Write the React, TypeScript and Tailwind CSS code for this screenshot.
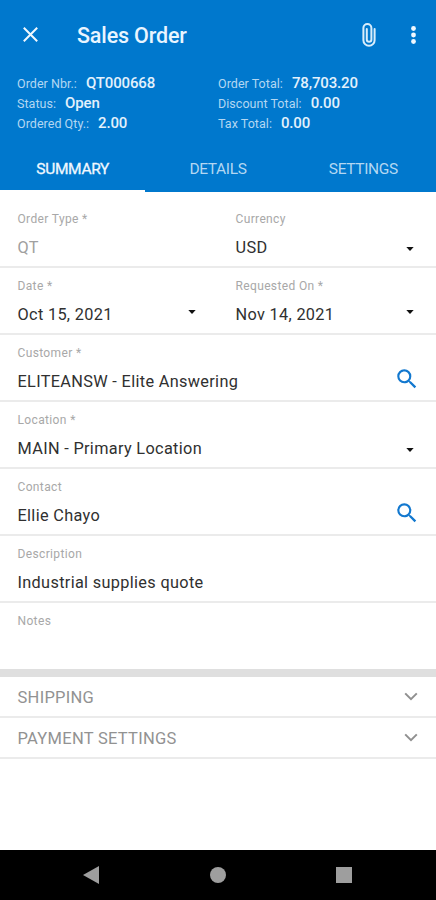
import React from "react";

type FieldProps = {
    label: string;
    value?: string;
    muted?: boolean;
    icon?: "arrow" | "date" | "search";
    className?: string;
};

const ArrowIcon = ({ className }: { className: string }) => (
    <svg className={`h-1 w-2 ${className}`} viewBox="0 0 8 4">
        <path d="M.3 0h7.4L4 4z" fill="#111" />
    </svg>
);

const SearchIcon = () => (
    <svg className="w-[26px] h-[26px] -mr-[9px]" viewBox="0 0 24 24" fill="#1278cf">
        <path d="M15.5 14h-.79l-.28-.27A6.471 6.471 0 0 0 16 9.5 6.5 6.5 0 1 0 9.5 16c1.61 0 3.09-.59 4.23-1.57l.27.28v.79l5 4.99L20.49 19l-4.99-5zm-6 0C7.01 14 5 11.99 5 9.5S7.01 5 9.5 5 14 7.01 14 9.5 11.99 14 9.5 14z" />
    </svg>
);

const ChevronIcon = () => (
    <svg className="w-[14px] h-[9px]" viewBox="0 0 14 9" fill="none" stroke="#909090" strokeWidth="2">
        <path d="M1.2 1.4l5.8 5.8 5.8-5.8" />
    </svg>
);

const Field: React.FC<FieldProps> = ({ label, value, muted, icon, className }) => {
    return (
        <div className={`flex flex-1 items-end justify-between pb-2 pl-[17.5px] ${className ?? ""}`}>
            <div className="flex flex-col">
                <label className="text-[12px] leading-4 tracking-[0.36px] text-[#a8a8a8]">{label}</label>
                <span className={`mt-[11px] h-5 text-[16.3px] leading-5 tracking-[0.33px] ${muted ? "text-[#a0a0a0]" : "text-[#303030]"}`}>
                    {value}
                </span>
            </div>
            {icon === "arrow" && <ArrowIcon className="mb-[7px]" />}
            {icon === "date" && <ArrowIcon className="mb-[11px]" />}
            {icon === "search" && <SearchIcon />}
        </div>
    );
};

const Row = ({ children }: { children: React.ReactNode }) => (
    <div className="flex h-[67px] border-b-2 border-[#ebebeb]">{children}</div>
);

const Info = ({ label, value }: { label: string; value: string }) => (
    <div className="flex h-5 items-baseline gap-[9px]">
        <span className="text-[12.5px] leading-5 tracking-[0.04px] text-[#b3d7f2]">{label}</span>
        <span className="text-[15px] leading-5 font-medium tracking-[-0.15px] text-[#e3f1fc]">{value}</span>
    </div>
);

const Section = ({ title }: { title: string }) => (
    <div className="flex h-[41px] items-center justify-between border-b-2 border-[#ebebeb] pl-[17.5px] pr-[18px]">
        <span className="pt-0.5 text-[16.5px] leading-5 tracking-[0.28px] text-[#929292]">{title}</span>
        <ChevronIcon />
    </div>
);

const App: React.FC = () => {
    return (
        <div className="flex h-[900px] w-[436px] flex-col overflow-hidden bg-white font-['Roboto',sans-serif]">
            <header className="flex h-48 flex-col bg-[#0078cd]">
                <div className="flex h-[74px] items-center pb-1 pl-[23px] pr-5">
                    <svg className="mb-px h-[15px] w-[15px]" viewBox="0 0 15 15" stroke="#f0f8ff" strokeWidth="2">
                        <path d="M.8.8l13.4 13.4M14.2.8L.8 14.2" />
                    </svg>
                    <h1 className="ml-[39px] flex-1 pt-0.5 text-[21.5px] leading-7 font-medium tracking-[-0.15px] text-[#e9f5ff]">Sales Order</h1>
                    <svg className="mb-px mr-[35px] h-6 w-[14px]" viewBox="0 0 14 24" fill="none" stroke="#d9edfb" strokeWidth="2" strokeLinecap="round">
                        <path d="M12.6 6v11.2a5.6 5.6 0 0 1-11.2 0V5a4 4 0 0 1 8 0v11.5a2.3 2.3 0 0 1-4.6 0V6" />
                    </svg>
                    <svg className="mb-px h-[18px] w-[5px]" viewBox="0 0 5 18" fill="#f0f8ff">
                        <circle cx="2.5" cy="2.5" r="2.4" />
                        <circle cx="2.5" cy="9" r="2.4" />
                        <circle cx="2.5" cy="15.5" r="2.4" />
                    </svg>
                </div>
                <div className="-mt-px flex pl-[17px]">
                    <div className="w-[201px]">
                        <Info label="Order Nbr.:" value="QT000668" />
                        <Info label="Status:" value="Open" />
                        <Info label="Ordered Qty.:" value="2.00" />
                    </div>
                    <div>
                        <Info label="Order Total:" value="78,703.20" />
                        <Info label="Discount Total:" value="0.00" />
                        <Info label="Tax Total:" value="0.00" />
                    </div>
                </div>
                <nav className="mt-auto flex h-[46px] text-center text-[15.5px] leading-[47px] tracking-[-0.35px] text-[#b3d7f2]">
                    <div className="flex-1 border-b-2 border-white text-[#f0f8ff] [-webkit-text-stroke:0.3px_#f0f8ff]">SUMMARY</div>
                    <div className="flex-1">DETAILS</div>
                    <div className="flex-1">SETTINGS</div>
                </nav>
            </header>

            <main className="flex flex-1 flex-col pt-[9px]">
                <Row>
                    <Field label="Order Type *" value="QT" muted className="pr-[22px]" />
                    <Field label="Currency" value="USD" icon="arrow" className="pr-[22px]" />
                </Row>
                <Row>
                    <Field label="Date *" value="Oct 15, 2021" icon="date" className="pr-[22px]" />
                    <Field label="Requested On *" value="Nov 14, 2021" icon="date" className="pr-[22px]" />
                </Row>
                <Row>
                    <Field label="Customer *" value="ELITEANSW - Elite Answering" icon="search" className="pr-[25px]" />
                </Row>
                <Row>
                    <Field label="Location *" value="MAIN - Primary Location" icon="arrow" className="pr-[22px]" />
                </Row>
                <Row>
                    <Field label="Contact" value="Ellie Chayo" icon="search" className="pr-[25px]" />
                </Row>
                <Row>
                    <Field label="Description" value="Industrial supplies quote" />
                </Row>
                <div className="flex h-[74px] border-b-8 border-[#dfdfdf]">
                    <Field label="Notes" className="pb-[9px]" />
                </div>
                <Section title="SHIPPING" />
                <Section title="PAYMENT SETTINGS" />
            </main>

            <footer className="flex h-[50px] items-center bg-black">
                <svg className="ml-[83px] h-[18px] w-4" viewBox="0 0 16 18" fill="#9e9e9e">
                    <path d="M16 0v18L0 9z" />
                </svg>
                <div className="ml-[111px] h-4 w-4 rounded-full bg-[#9e9e9e]"></div>
                <div className="ml-[110px] h-4 w-4 bg-[#9e9e9e]"></div>
            </footer>
        </div>
    );
};

export default App;
